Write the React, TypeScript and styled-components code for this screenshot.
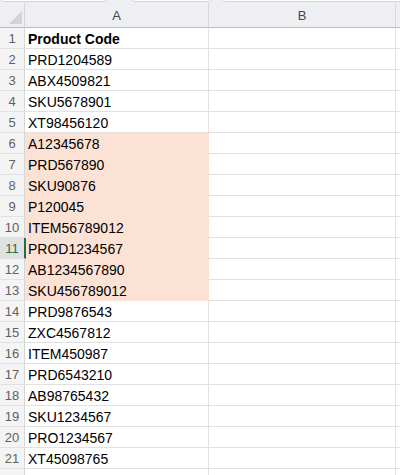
import React from 'react';
import styled, { createGlobalStyle } from 'styled-components';

const GlobalStyle = createGlobalStyle`
	body {
		margin: 0;
		background: #ffffff;
		font-family: "Liberation Sans", Arial, sans-serif;
	}
`;

const Sheet = styled.div`
	width: 400px;
	height: 475px;
	overflow: hidden;
	background: #ffffff;
`;

const TopStrip = styled.div`
	display: flex;
	height: 3px;
	background: #eeeff3;
	overflow: hidden;
`;

const TopBox = styled.div<{ $w: number; $gap: number }>`
	width: ${(p) => p.$w}px;
	margin-right: ${(p) => p.$gap}px;
	height: 8px;
	margin-top: -6px;
	background: #ffffff;
	border: 1px solid #d2d2d6;
	border-radius: 4px;
	box-sizing: border-box;
	flex-shrink: 0;
`;

const Grid = styled.div`
	display: grid;
	grid-template-columns: 25px 184px 187px 40px;
`;

const Corner = styled.div`
	height: 24px;
	background: #eeeff3;
	border-bottom: 1px solid #bdbdbd;
	border-right: 1px solid #d4d4d8;
	position: relative;
	&::after {
		content: '';
		position: absolute;
		right: 2px;
		bottom: 3px;
		width: 0;
		height: 0;
		border-left: 13px solid transparent;
		border-bottom: 13px solid #d3d3d6;
	}
`;

const ColHead = styled.div`
	height: 24px;
	background: #eeeff3;
	border-bottom: 1px solid #bdbdbd;
	border-right: 1px solid #d8d8dc;
	display: flex;
	align-items: center;
	justify-content: center;
	font-size: 13px;
	color: #454545;
`;

const RowHead = styled.div<{ $active?: boolean }>`
	height: 19px;
	padding-top: 1px;
	background: ${(p) => (p.$active ? '#e1e1e1' : '#f4f4f4')};
	border-bottom: 1px solid #e2e2e2;
	border-right: ${(p) => (p.$active ? '2px solid #1e7145' : '1px solid #d6d6d6')};
	display: flex;
	align-items: center;
	justify-content: center;
	font-size: 13px;
	color: ${(p) => (p.$active ? '#1e7145' : '#616161')};
	margin-right: ${(p) => (p.$active ? '-1px' : '0')};
	position: relative;
	z-index: 1;
`;

const Cell = styled.div<{ $fill?: boolean; $bold?: boolean }>`
	height: 19px;
	padding: 1px 0 0 3px;
	background: ${(p) => (p.$fill ? '#fbe2d5' : '#ffffff')};
	border-bottom: 1px solid ${(p) => (p.$fill ? '#fbe2d5' : '#e1e1e1')};
	border-right: 1px solid ${(p) => (p.$fill ? '#fbe2d5' : '#e1e1e1')};
	display: flex;
	align-items: center;
	font-size: 14px;
	font-weight: ${(p) => (p.$bold ? 700 : 400)};
	color: #000000;
	white-space: nowrap;
`;

const codes = [
	'PRD1204589',
	'ABX4509821',
	'SKU5678901',
	'XT98456120',
	'A12345678',
	'PRD567890',
	'SKU90876',
	'P120045',
	'ITEM56789012',
	'PROD1234567',
	'AB1234567890',
	'SKU456789012',
	'PRD9876543',
	'ZXC4567812',
	'ITEM450987',
	'PRD6543210',
	'AB98765432',
	'SKU1234567',
	'PRO1234567',
	'XT45098765',
];

const App = () => {
	const rows = ['Product Code', ...codes];

	return (
		<Sheet>
			<GlobalStyle />
			<TopStrip>
				<TopBox $w={107} $gap={24} />
				<TopBox $w={82} $gap={9} />
				<TopBox $w={200} $gap={0} />
			</TopStrip>
			<Grid>
				<Corner />
				<ColHead>A</ColHead>
				<ColHead>B</ColHead>
				<ColHead />
				{rows.map((value, i) => {
					const n = i + 1;
					const fill = n >= 6 && n <= 13;
					return (
						<React.Fragment key={n}>
							<RowHead $active={n === 11}>{n}</RowHead>
							<Cell $fill={fill} $bold={n === 1}>{value}</Cell>
							<Cell />
							<Cell />
						</React.Fragment>
					);
				})}
				<RowHead />
				<Cell />
				<Cell />
				<Cell />
			</Grid>
		</Sheet>
	);
};

export default App;
